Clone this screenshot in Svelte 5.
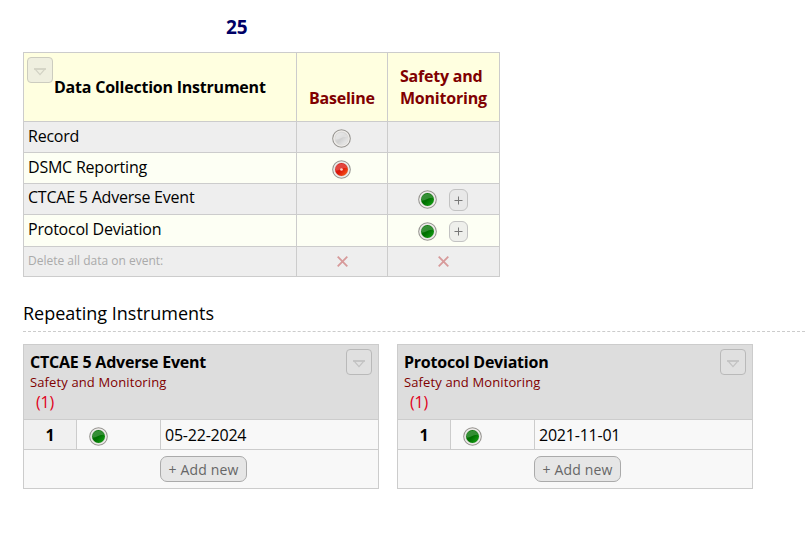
<script>
  const rows = [
    { name: 'Record', height: 30, baseline: 'gray', safety: null },
    { name: 'DSMC Reporting', height: 30, baseline: 'red', safety: null },
    { name: 'CTCAE 5 Adverse Event', height: 30, baseline: null, safety: 'green', raised: true },
    { name: 'Protocol Deviation', height: 31, baseline: null, safety: 'green' }
  ];
  const cards = [
    { title: 'CTCAE 5 Adverse Event', date: '05-22-2024' },
    { title: 'Protocol Deviation', date: '2021-11-01' }
  ];
</script>

{#snippet status(color)}
  <svg class="status" width="19" height="19" viewBox="0 0 20 20">
    <defs>
      <linearGradient id="g-gray" x1="0" y1="0" x2="1" y2="1"><stop offset="0" stop-color="#e2e2e2" /><stop offset=".5" stop-color="#d0d0d0" /><stop offset="1" stop-color="#f2f2f2" /></linearGradient>
      <linearGradient id="g-red" x1="0" y1="0" x2="1" y2="1"><stop offset="0" stop-color="#d82020" /><stop offset=".5" stop-color="#dc1408" /><stop offset="1" stop-color="#ff6a20" /></linearGradient>
      <linearGradient id="g-green" x1="0" y1="0" x2="1" y2="1"><stop offset="0" stop-color="#087808" /><stop offset=".5" stop-color="#007000" /><stop offset="1" stop-color="#18a818" /></linearGradient>
    </defs>
    <circle cx="10" cy="10" r="9.2" fill="#dddbd8" stroke="#9a9894" stroke-width="1.3" />
    <circle cx="10" cy="10" r="8" fill="none" stroke="#efedeb" stroke-width="1.1" />
    <circle cx="10" cy="10" r="6.8" fill="url(#g-{color})" />
    <path d="M3.6 11A6.5 6.5 0 0 1 16.1 8Q11 8.4 8.5 10T3.6 11Z" fill="#fff" opacity={color === 'gray' ? 0.3 : 0.2} />
    {#if color === 'red'}<circle cx="10" cy="10" r="1.4" fill="#ffd0c8" />{/if}
  </svg>
{/snippet}

{#snippet arrow()}
  <svg width="12" height="8" viewBox="0 0 12 8"><path d="M1 1H11L6 6.6Z" fill="none" stroke="currentColor" stroke-width="1.2" /><path d="M0 1H12" stroke="currentColor" stroke-width="1.6" /></svg>
{/snippet}

{#snippet cross()}
  <svg class="cross" width="11" height="11" viewBox="0 0 11 11"><path d="M.7 .7L10.3 10.3M10.3 .7L.7 10.3" stroke="#d79a9a" stroke-width="1.8" /></svg>
{/snippet}

<main>
  <div class="record">25</div>

  <div class="grid">
    <div class="row head">
      <div class="cell instrument">
        <button class="menu" aria-label="Options">{@render arrow()}</button>
        <span class="label">Data Collection Instrument</span>
      </div>
      <div class="cell event"><span>Baseline</span></div>
      <div class="cell event"><span>Safety and<br />Monitoring</span></div>
    </div>
    {#each rows as row, i}
      <div class="row body" class:even={i % 2 === 1} class:raised={row.raised} style="height: {row.height}px">
        <div class="cell name"><span>{row.name}</span></div>
        <div class="cell mid">{#if row.baseline}{@render status(row.baseline)}{/if}</div>
        <div class="cell mid">
          {#if row.safety}
            {@render status(row.safety)}
            <button class="plus" aria-label="Add instance"><svg width="9" height="9" viewBox="0 0 9 9"><path d="M4.5 .5V8.5M.5 4.5H8.5" stroke="#777" /></svg></button>
          {/if}
        </div>
      </div>
    {/each}
    <div class="row delete">
      <div class="cell"><span>Delete all data on event:</span></div>
      <div class="cell mid">{@render cross()}</div>
      <div class="cell mid">{@render cross()}</div>
    </div>
  </div>

  <h2><span>Repeating Instruments</span></h2>

  <div class="cards">
    {#each cards as card}
      <section class="card">
        <header>
          <div class="titles">
            <div class="title">{card.title}</div>
            <div class="sub">Safety and Monitoring</div>
            <div class="count">(1)</div>
          </div>
          <button class="menu" aria-label="Options">{@render arrow()}</button>
        </header>
        <div class="instance">
          <div class="num">1</div>
          <div class="state">{@render status('green')}</div>
          <div class="date"><span>{card.date}</span></div>
        </div>
        <footer><button class="add">+ Add new</button></footer>
      </section>
    {/each}
  </div>
</main>

<style>
  :global(body) { margin: 0; background: #fff; }
  main {
    box-sizing: border-box;
    width: 805px;
    height: 544px;
    padding-left: 23px;
    overflow: hidden;
    font-family: "Open Sans", "Noto Sans", sans-serif;
    font-size: 16px;
    letter-spacing: -0.22px;
    color: #000;
  }
  div, header, footer, section, button, h2 { box-sizing: border-box; }
  svg { display: block; flex: none; }
  button { padding: 0; margin: 0; font-family: inherit; display: flex; align-items: center; justify-content: center; }
  .record { height: 52px; padding: 14px 0 0 203px; font-size: 19px; line-height: 26px; font-weight: 700; letter-spacing: 0; color: #000066; }

  .grid { width: 477px; padding: 1px; background: #ccc; display: flex; flex-direction: column; gap: 1px; }
  .row { display: grid; grid-template-columns: 272px 90px 111px; gap: 1px; }
  .head { height: 68px; font-weight: 700; }
  .head .cell { background: #ffffe0; }
  .instrument { display: flex; align-items: flex-start; padding: 4px 0 0 3px; }
  .menu { width: 26px; height: 26px; border: 1px solid #b9b9b9; border-radius: 4px; background: #e0e0e0; color: #c2c2c2; flex: none; }
  .instrument .menu { border-color: #ccccbf; background: #efefdf; color: #d2d2c4; }
  .menu svg { margin-top: 3px; }
  .label { line-height: 22px; margin: 19px 0 0 1px; white-space: nowrap; }
  .event { display: flex; align-items: flex-end; padding: 0 0 12px 12px; line-height: 22px; color: #800000; white-space: nowrap; }
  .body .cell { background: #eee; }
  .even .cell { background: #fdfff4; }
  .name { padding: 3px 0 0 4px; line-height: 22px; white-space: nowrap; }
  .raised .name { padding-top: 2px; }
  .mid { display: flex; align-items: center; justify-content: center; }
  .body .mid { padding: 7px 1px 0 0; align-items: flex-start; }
  .raised .mid { padding-top: 6px; }
  .plus { width: 19px; height: 21px; margin: -1px 0 0 12px; border: 1px solid #c2c2c2; border-radius: 6px; background: rgba(228, 228, 228, .6); }
  .raised .plus { height: 22px; }
  .cross { margin-right: 1px; }
  .mid:nth-child(2) .cross { margin-right: 0; }
  .delete { height: 29px; font-size: 12px; letter-spacing: 0; color: #aaa; }
  .delete .cell { background: #eee; }
  .delete .cell:first-child { padding: 5px 0 0 4px; line-height: 18px; }

  h2 { margin: 0; height: 55px; padding-top: 23px; border-bottom: 1px dashed #ccc; font-size: 18px; line-height: 26px; font-weight: 400; letter-spacing: 0; }
  .cards { display: flex; gap: 18px; margin-top: 12px; }
  .card { width: 356px; height: 145px; padding: 1px; background: #ccc; display: flex; flex-direction: column; gap: 1px; }
  header { height: 74px; display: flex; justify-content: space-between; padding: 4px 6px 0; background: #ddd; }
  .title { font-weight: 700; height: 25px; line-height: 27px; }
  .sub { font-size: 13px; line-height: 16px; letter-spacing: .12px; color: #800000; }
  .count { color: #e00020; line-height: 25px; padding-left: 6px; }
  .instance { height: 29px; display: grid; grid-template-columns: 52px 83px 217px; gap: 1px; }
  .num, .date { height: 29px; line-height: 31px; }
  .num { background: #f0f0f0; text-align: center; font-weight: 700; }
  .state { background: #f8f8f8; padding: 7px 0 0 12px; }
  .date { background: #f8f8f8; padding-left: 4px; }
  footer { height: 38px; background: #f8f8f8; padding: 6px 0 0 136px; }
  .add { width: 87px; height: 26px; border: 1px solid #aaa; border-radius: 7px; background: #e6e6e6; color: #666; font-size: 14px; letter-spacing: .15px; line-height: 24px; padding-top: 1px; }
</style>
